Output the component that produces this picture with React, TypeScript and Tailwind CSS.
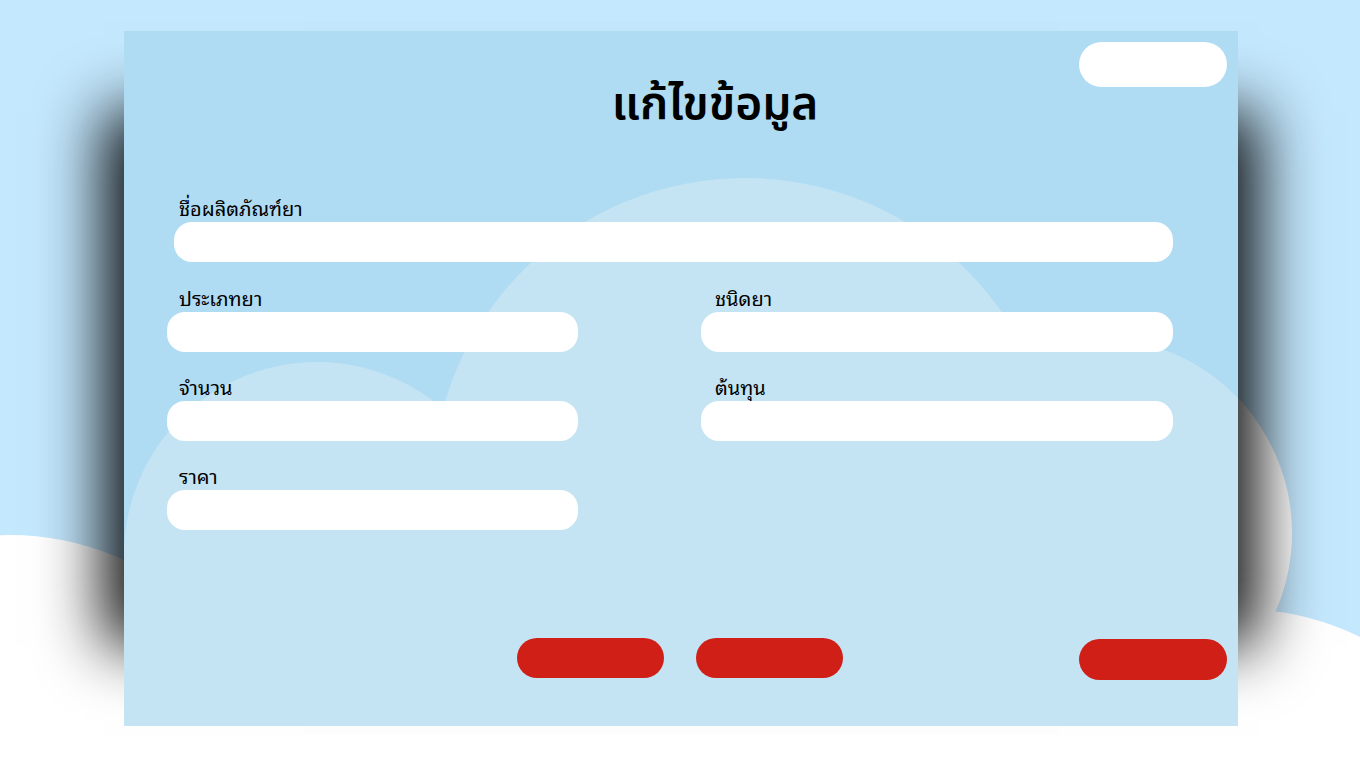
import React from "react";

function Clouds() {
  return (
    <svg
      className="absolute inset-0 h-full w-full"
      viewBox="0 0 1360 768"
      preserveAspectRatio="none"
      aria-hidden="true"
    >
      <g fill="#ffffff">
        <circle cx="745" cy="491" r="313" />
        <circle cx="1097" cy="533" r="195" />
        <circle cx="317" cy="555" r="193" />
        <circle cx="10" cy="807" r="272" />
        <circle cx="1240" cy="881" r="272" />
        <rect x="0" y="650" width="1360" height="118" />
      </g>
    </svg>
  );
}

function Field({ label, labelClass = "pl-3" }: { label: string; labelClass?: string }) {
  return (
    <div>
      <label
        className={`block pb-[6px] text-[20px] leading-[18px] text-black font-['Noto_Sans_Thai_Looped','Noto_Sans_Thai',sans-serif] ${labelClass}`}
      >
        {label}
      </label>
      <input
        type="text"
        className="block h-10 w-full rounded-[18px] bg-white px-4 text-base outline-none"
      />
    </div>
  );
}

export default function App() {
  return (
    <main className="relative h-screen w-full overflow-hidden bg-[#c4e8fe]">
      <Clouds />

      <div className="relative ml-[124px] mt-[31px] flex h-[695px] w-[1114px] flex-col bg-[rgba(162,211,236,0.62)] shadow-[100px_0_60px_-80px_rgba(0,0,0,0.95),-100px_0_60px_-80px_rgba(0,0,0,0.95)]">
        {/* header */}
        <div className="grid h-[167px] grid-cols-[1fr_auto_1fr] items-start">
          <div />
          <h1 className="ml-[68px] mt-[42px] text-[46px] font-semibold leading-[64px] text-black font-['Noto_Sans_Thai',sans-serif]">
            แก้ไขข้อมูล
          </h1>
          <div className="flex justify-end pr-[11px] pt-[11px]">
            <button type="button" className="h-[45px] w-[148px] rounded-full bg-white" />
          </div>
        </div>

        {/* form */}
        <div className="pl-[43px] pr-[65px]">
          <div className="ml-[7px]">
            <Field label="ชื่อผลิตภัณฑ์ยา" labelClass="pl-[5px]" />
          </div>

          <div className="mt-[26px] grid grid-cols-[411px_472px] justify-between gap-y-[25px]">
            <Field label="ประเภทยา" />
            <Field label="ชนิดยา" labelClass="pl-[14px]" />
            <Field label="จำนวน" />
            <Field label="ต้นทุน" labelClass="pl-[14px]" />
            <Field label="ราคา" />
          </div>
        </div>

        {/* actions */}
        <div className="mt-auto mb-[46px] grid grid-cols-[1fr_auto_1fr] items-start">
          <div />
          <div className="mr-[2px] flex gap-8">
            <button type="button" className="h-10 w-[147px] rounded-full bg-[#d01f16]" />
            <button type="button" className="h-10 w-[147px] rounded-full bg-[#d01f16]" />
          </div>
          <div className="flex justify-end pr-[11px]">
            <button type="button" className="mt-px h-[41px] w-[148px] rounded-full bg-[#d01f16]" />
          </div>
        </div>
      </div>
    </main>
  );
}
